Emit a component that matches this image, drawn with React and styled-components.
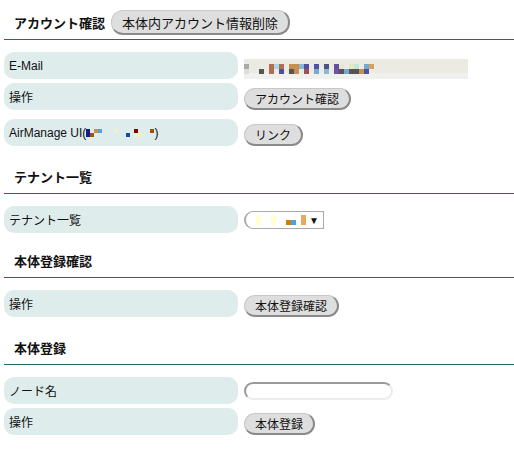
import React from 'react'
import styled, { createGlobalStyle } from 'styled-components'

const GlobalStyle = createGlobalStyle`
    body {
        margin: 0;
        background: #fff;
        font-family: "Liberation Sans", "Noto Sans CJK JP", sans-serif;
        color: #111;
    }
`;

const Page = styled.div`
    padding: 0 0 0 4px;
`;

const Section = styled.section`
    margin-top: ${p => p.$top}px;
`;

const SectionHeader = styled.div`
    display: flex;
    align-items: center;
    gap: 6px;
    min-height: 25px;
    padding: 10px 0 4px 10px;
    border-bottom: 1px solid #236a63;
    h2 {
        margin: 0;
        font-size: 13px;
        font-weight: bold;
    }
`;

const Rows = styled.div`
    display: flex;
    flex-direction: column;
    gap: 4px;
    margin-top: 12px;
`;

const Row = styled.div`
    display: grid;
    grid-template-columns: 234px 1fr;
    column-gap: 6px;
    align-items: start;
    margin-bottom: ${p => p.$after || 0}px;
`;

const Label = styled.div`
    display: flex;
    align-items: center;
    height: 27px;
    padding: 0 5px;
    background: #deeceb;
    border-radius: 10px;
    font-size: 12px;
    white-space: nowrap;
`;

const Value = styled.div`
    display: flex;
    align-items: center;
    padding-top: ${p => p.$pad ?? 5}px;
`;

const Button = styled.button`
    height: ${p => (p.$big ? 25 : 22)}px;
    padding: 0 10px;
    font-family: inherit;
    font-size: ${p => (p.$big ? 13 : 12)}px;
    color: #111;
    background: #dedede;
    border-style: solid;
    border-width: 1px 2px 2px 1px;
    border-color: #c8c8c8 #8a8a8a #8a8a8a #c8c8c8;
    border-radius: 12px;
    white-space: nowrap;
`;

const TextInput = styled.input`
    width: 149px;
    height: 18px;
    box-sizing: border-box;
    border-style: solid;
    border-width: 2px;
    border-color: #999 #ececec #ececec #999;
    border-radius: 9px;
    outline: none;
`;

const Strip = styled.div`
    display: flex;
    align-items: center;
    width: 224px;
    height: 20px;
    background: linear-gradient(#ebebe4 0 70%, #f0f0ee 70%);
    margin-top: 1px;
`;

const Mask = styled.span`
    display: inline-grid;
    grid-template-columns: repeat(${p => p.$cols}, ${p => p.$size}px);
    grid-auto-rows: ${p => p.$size}px;
    vertical-align: middle;
`;

const Cell = styled.span`
    background: ${p => p.$c || 'transparent'};
`;

const Select = styled.div`
    display: flex;
    align-items: center;
    justify-content: space-between;
    width: 80px;
    height: 18px;
    box-sizing: border-box;
    padding: 0 4px 0 10px;
    border: 1px solid #a9a9a9;
    border-left: 2px solid #a9a9a9;
    border-radius: 9px 0 0 9px;
    font-size: 10px;
`;

const AirLabel = styled.span`
    display: flex;
    align-items: center;
`;

// masked values, one colour per pixel cell
const emailMask = [
    '#aaa,,,,,#b07050,#a8d8e8,#b07050,,#c89050,#c89050,#88b8d8,#5050a0,,#5050a0,,#505080,,#6050a0,#e8e8d0,,#e8e8c0,#c0e8d8,,#78a8d0,#d8a060',
    '#ddd,,,#555,,#b07050,,#5050a0,,#555,#c89050,,#a05050,,#78a8d0,,#88b8d8,,#7050a0,#555,#78a8d0,#555,#555,#c89050,#5050a0,',
].map(r => r.split(','));

const airMask = [
    '#1a1a80,,#c89050,#50a0e0,,,,#f0f0d0,,,,,#800000,,,,#a05010',
    '#1a1a80,#a05010,,,,,,,,,#1050a0,,#f0f0c8,#f0f0c8,,,',
].map(r => r.split(','));

const tenantMask = [
    '#ffffd0,,,#ffffd0,,,,,,#e8a860',
    '#ffffd0,,,#ffffd0,,,#d08000,#50a0e0,,#e8a860',
].map(r => r.split(','));

const PixelMask = ({ rows, size }) => (
    <Mask $cols={rows[0].length} $size={size}>
        {rows.flatMap((row, r) => row.map((c, i) => <Cell key={r + '-' + i} $c={c} />))}
    </Mask>
);

const App = () => {
    return (
        <Page>
            <GlobalStyle />
            <Section $top={0}>
                <SectionHeader>
                    <h2>アカウント確認</h2>
                    <Button $big>本体内アカウント情報削除</Button>
                </SectionHeader>
                <Rows>
                    <Row>
                        <Label>E-Mail</Label>
                        <Value $pad={6}>
                            <Strip>
                                <PixelMask rows={emailMask} size={5} />
                            </Strip>
                        </Value>
                    </Row>
                    <Row $after={5}>
                        <Label>操作</Label>
                        <Value><Button>アカウント確認</Button></Value>
                    </Row>
                    <Row>
                        <Label>
                            <AirLabel>
                                AirManage UI(<PixelMask rows={airMask} size={4} />)
                            </AirLabel>
                        </Label>
                        <Value><Button>リンク</Button></Value>
                    </Row>
                </Rows>
            </Section>

            <Section $top={8}>
                <SectionHeader>
                    <h2>テナント一覧</h2>
                </SectionHeader>
                <Rows>
                    <Row>
                        <Label>テナント一覧</Label>
                        <Value $pad={5}>
                            <Select>
                                <PixelMask rows={tenantMask} size={5} />
                                <span>▼</span>
                            </Select>
                        </Value>
                    </Row>
                </Rows>
            </Section>

            <Section $top={5}>
                <SectionHeader>
                    <h2>本体登録確認</h2>
                </SectionHeader>
                <Rows>
                    <Row>
                        <Label>操作</Label>
                        <Value><Button>本体登録確認</Button></Value>
                    </Row>
                </Rows>
            </Section>

            <Section $top={8}>
                <SectionHeader>
                    <h2>本体登録</h2>
                </SectionHeader>
                <Rows>
                    <Row>
                        <Label>ノード名</Label>
                        <Value><TextInput /></Value>
                    </Row>
                    <Row>
                        <Label>操作</Label>
                        <Value><Button>本体登録</Button></Value>
                    </Row>
                </Rows>
            </Section>
        </Page>
    )
}

export default App;
